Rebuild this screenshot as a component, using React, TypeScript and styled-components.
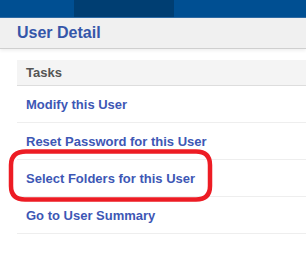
import styled, { createGlobalStyle } from 'styled-components';

const tasks = [
  'Modify this User',
  'Reset Password for this User',
  'Select Folders for this User',
  'Go to User Summary',
];

const App = (): JSX.Element => {
  return (
    <Page>
      <GlobalStyle />
      <TopBar>
        <ActiveTab />
      </TopBar>
      <Header>
        <Title>User Detail</Title>
      </Header>
      <Panel>
        <PanelHeader>Tasks</PanelHeader>
        {tasks.map((task) => (
          <TaskRow key={task}>
            <TaskLink href="#">{task}</TaskLink>
          </TaskRow>
        ))}
      </Panel>
      <Annotation width="306" height="266" viewBox="0 0 306 266">
        <path
          d="M26 151.5 H196 Q210 151.5 210 165 V186 Q210 199.5 196 199.5 H25 Q11 199.5 11 186 V165 Q11 151.5 26 151.5 Z"
          fill="none"
          stroke="#ed1c24"
          strokeWidth="4.5"
        />
      </Annotation>
    </Page>
  );
};

const GlobalStyle = createGlobalStyle`
  body {
    margin: 0;
    background: #fff;
    font-family: "Liberation Sans", Arial, sans-serif;
  }
`;

const Page = styled.div`
  position: relative;
  width: 306px;
  height: 266px;
  overflow: hidden;
`;

const TopBar = styled.div`
  height: 17px;
  background: #004f92;
  border-bottom: 1px solid #2e6aa3;
  display: flex;
  padding-left: 74px;
`;

const ActiveTab = styled.div`
  width: 100px;
  height: 100%;
  background: #003e72;
`;

const Header = styled.div`
  height: 30px;
  background: #f0f0f0;
  border-bottom: 1px solid #cfcfcf;
  box-shadow: 0 2px 3px rgba(0, 0, 0, 0.06);
  display: flex;
  align-items: center;
  padding-left: 17px;
`;

const Title = styled.h1`
  margin: 0;
  font-size: 16px;
  font-weight: bold;
  color: #3556a9;
`;

const Panel = styled.div`
  margin: 11px 0 0 17px;
`;

const PanelHeader = styled.div`
  height: 25px;
  background: #f4f4f4;
  border-bottom: 1px solid #dddddd;
  display: flex;
  align-items: center;
  padding-left: 9px;
  font-size: 13px;
  font-weight: bold;
  color: #555;
`;

const TaskRow = styled.div`
  height: 36px;
  border-bottom: 1px solid #eeeeee;
  display: flex;
  align-items: center;
  padding-left: 9px;
`;

const TaskLink = styled.a`
  font-size: 13px;
  font-weight: bold;
  color: #3d57b5;
  text-decoration: none;
`;

const Annotation = styled.svg`
  position: absolute;
  left: 0;
  top: 0;
  pointer-events: none;
`;

export default App;
